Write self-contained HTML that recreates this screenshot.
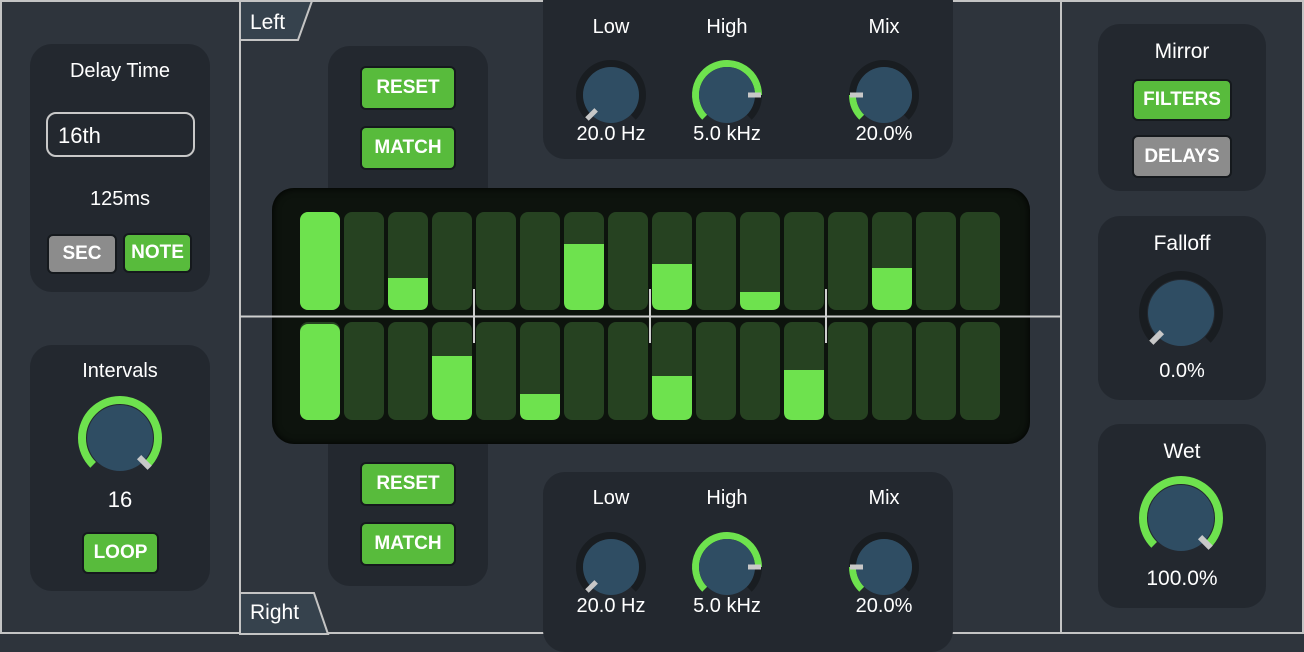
<!DOCTYPE html>
<html><head><meta charset="utf-8"><style>
*{margin:0;padding:0;box-sizing:border-box}
body{width:1304px;height:634px;background:#2e343c;position:relative;overflow:hidden;font-family:"Liberation Sans",sans-serif;color:#fff}
.a{position:absolute}
.pn{position:absolute;background:#23282f;border-radius:22px}
.t{position:absolute;text-align:center;font-size:20px;white-space:nowrap}
.b{position:absolute;border-radius:6px;text-align:center;font-size:19px;font-weight:bold;color:#fff;border:2px solid #15191d;line-height:36px}
.g{background:#58bb3c}
.gr{background:#8c8c8c}
svg{position:absolute;overflow:visible}
</style></head><body>
<!-- frame -->
<div class="a" style="left:0;top:0;width:1304px;height:634px;border:2px solid #c4c4c4"></div>
<div class="a" style="left:239px;top:0;width:2px;height:634px;background:#c4c4c4"></div>
<div class="a" style="left:1060px;top:0;width:2px;height:634px;background:#c4c4c4"></div>

<!-- left column -->
<div class="pn" style="left:30px;top:44px;width:180px;height:248px"></div>
<div class="t" style="left:30px;top:60px;width:180px">Delay Time</div>
<div class="a" style="left:46px;top:112px;width:149px;height:45px;border:2px solid #c8c8c8;border-radius:10px;font-size:22px;padding:9px 0 0 10px">16th</div>
<div class="t" style="left:30px;top:188px;width:180px">125ms</div>
<div class="b gr" style="left:47px;top:234px;width:70px;height:40px">SEC</div>
<div class="b g" style="left:123px;top:233px;width:69px;height:40px">NOTE</div>

<div class="pn" style="left:30px;top:345px;width:180px;height:246px"></div>
<div class="t" style="left:30px;top:360px;width:180px">Intervals</div>
<svg style="left:120px;top:438px" width="1" height="1"><path d="M-26.87 26.87 A38 38 0 1 1 26.87 26.87" fill="none" stroke="#6ee24e" stroke-width="8"/><circle r="33" fill="#2f4d63"/><rect x="-3" y="-42" width="6" height="15" fill="#c8c8c8" transform="rotate(135)"/></svg>
<div class="t" style="left:30px;top:487px;width:180px;font-size:22px">16</div>
<div class="b g" style="left:82px;top:532px;width:77px;height:42px;line-height:38px">LOOP</div>

<!-- tabs -->
<svg style="left:240px;top:0" width="80" height="42"><path d="M0 40 L58 40 L72 1 L0 1 Z" fill="#36424d" stroke="#c4c4c4" stroke-width="2"/><text x="10" y="29" fill="#fff" font-size="21" font-family="Liberation Sans">Left</text></svg>
<svg style="left:240px;top:592px" width="95" height="42"><path d="M0 1 L74 1 L88 42 L0 42 Z" fill="#36424d" stroke="#c4c4c4" stroke-width="2"/><text x="10" y="27" fill="#fff" font-size="21" font-family="Liberation Sans">Right</text></svg>

<!-- button panels -->
<div class="pn" style="left:328px;top:46px;width:160px;height:180px"></div>
<div class="b g" style="left:360px;top:66px;width:96px;height:44px;line-height:40px">RESET</div>
<div class="b g" style="left:360px;top:126px;width:96px;height:44px;line-height:40px">MATCH</div>
<div class="pn" style="left:328px;top:420px;width:160px;height:166px"></div>
<div class="b g" style="left:360px;top:462px;width:96px;height:44px;line-height:40px">RESET</div>
<div class="b g" style="left:360px;top:522px;width:96px;height:44px;line-height:40px">MATCH</div>

<!-- filter panels -->
<div class="pn" style="left:543px;top:-20px;width:410px;height:179px"></div>
<div class="pn" style="left:543px;top:472px;width:410px;height:180px"></div>

<div class="t" style="left:571px;top:16px;width:80px">Low</div>
<div class="t" style="left:687px;top:16px;width:80px">High</div>
<div class="t" style="left:844px;top:16px;width:80px">Mix</div>
<div class="t" style="left:561px;top:123px;width:100px">20.0 Hz</div>
<div class="t" style="left:677px;top:123px;width:100px">5.0 kHz</div>
<div class="t" style="left:834px;top:123px;width:100px">20.0%</div>
<svg style="left:611px;top:95px" width="1" height="1"><path d="M-22.27 22.27 A31.5 31.5 0 1 1 22.27 22.27" fill="none" stroke="#191d21" stroke-width="7"/><circle r="28" fill="#2f4d63"/><rect x="-2.5" y="-34" width="5" height="13" fill="#c8c8c8" transform="rotate(-135)"/></svg>
<svg style="left:727px;top:95px" width="1" height="1"><path d="M-22.27 22.27 A31.5 31.5 0 1 1 22.27 22.27" fill="none" stroke="#191d21" stroke-width="7"/><path d="M-22.27 22.27 A31.5 31.5 0 1 1 31.5 0" fill="none" stroke="#6ee24e" stroke-width="7"/><circle r="28" fill="#2f4d63"/><rect x="-2.5" y="-34" width="5" height="13" fill="#c8c8c8" transform="rotate(90)"/></svg>
<svg style="left:884px;top:95px" width="1" height="1"><path d="M-22.27 22.27 A31.5 31.5 0 1 1 22.27 22.27" fill="none" stroke="#191d21" stroke-width="7"/><path d="M-22.27 22.27 A31.5 31.5 0 0 1 -31.5 0" fill="none" stroke="#6ee24e" stroke-width="7"/><circle r="28" fill="#2f4d63"/><rect x="-2.5" y="-34" width="5" height="13" fill="#c8c8c8" transform="rotate(-90)"/></svg>

<div class="t" style="left:571px;top:487px;width:80px">Low</div>
<div class="t" style="left:687px;top:487px;width:80px">High</div>
<div class="t" style="left:844px;top:487px;width:80px">Mix</div>
<div class="t" style="left:561px;top:595px;width:100px">20.0 Hz</div>
<div class="t" style="left:677px;top:595px;width:100px">5.0 kHz</div>
<div class="t" style="left:834px;top:595px;width:100px">20.0%</div>
<svg style="left:611px;top:567px" width="1" height="1"><path d="M-22.27 22.27 A31.5 31.5 0 1 1 22.27 22.27" fill="none" stroke="#191d21" stroke-width="7"/><circle r="28" fill="#2f4d63"/><rect x="-2.5" y="-34" width="5" height="13" fill="#c8c8c8" transform="rotate(-135)"/></svg>
<svg style="left:727px;top:567px" width="1" height="1"><path d="M-22.27 22.27 A31.5 31.5 0 1 1 22.27 22.27" fill="none" stroke="#191d21" stroke-width="7"/><path d="M-22.27 22.27 A31.5 31.5 0 1 1 31.5 0" fill="none" stroke="#6ee24e" stroke-width="7"/><circle r="28" fill="#2f4d63"/><rect x="-2.5" y="-34" width="5" height="13" fill="#c8c8c8" transform="rotate(90)"/></svg>
<svg style="left:884px;top:567px" width="1" height="1"><path d="M-22.27 22.27 A31.5 31.5 0 1 1 22.27 22.27" fill="none" stroke="#191d21" stroke-width="7"/><path d="M-22.27 22.27 A31.5 31.5 0 0 1 -31.5 0" fill="none" stroke="#6ee24e" stroke-width="7"/><circle r="28" fill="#2f4d63"/><rect x="-2.5" y="-34" width="5" height="13" fill="#c8c8c8" transform="rotate(-90)"/></svg>

<!-- sequencer -->
<div class="a" style="left:272px;top:188px;width:758px;height:256px;background:#0d130d;border-radius:22px;box-shadow:inset 0 0 8px #000"></div>
<svg style="left:0;top:0" width="1304" height="634">
<g fill="#264221">
<rect x="300" y="212" width="40" height="98" rx="8"/><rect x="344" y="212" width="40" height="98" rx="8"/><rect x="388" y="212" width="40" height="98" rx="8"/><rect x="432" y="212" width="40" height="98" rx="8"/><rect x="476" y="212" width="40" height="98" rx="8"/><rect x="520" y="212" width="40" height="98" rx="8"/><rect x="564" y="212" width="40" height="98" rx="8"/><rect x="608" y="212" width="40" height="98" rx="8"/><rect x="652" y="212" width="40" height="98" rx="8"/><rect x="696" y="212" width="40" height="98" rx="8"/><rect x="740" y="212" width="40" height="98" rx="8"/><rect x="784" y="212" width="40" height="98" rx="8"/><rect x="828" y="212" width="40" height="98" rx="8"/><rect x="872" y="212" width="40" height="98" rx="8"/><rect x="916" y="212" width="40" height="98" rx="8"/><rect x="960" y="212" width="40" height="98" rx="8"/>
<rect x="300" y="322" width="40" height="98" rx="8"/><rect x="344" y="322" width="40" height="98" rx="8"/><rect x="388" y="322" width="40" height="98" rx="8"/><rect x="432" y="322" width="40" height="98" rx="8"/><rect x="476" y="322" width="40" height="98" rx="8"/><rect x="520" y="322" width="40" height="98" rx="8"/><rect x="564" y="322" width="40" height="98" rx="8"/><rect x="608" y="322" width="40" height="98" rx="8"/><rect x="652" y="322" width="40" height="98" rx="8"/><rect x="696" y="322" width="40" height="98" rx="8"/><rect x="740" y="322" width="40" height="98" rx="8"/><rect x="784" y="322" width="40" height="98" rx="8"/><rect x="828" y="322" width="40" height="98" rx="8"/><rect x="872" y="322" width="40" height="98" rx="8"/><rect x="916" y="322" width="40" height="98" rx="8"/><rect x="960" y="322" width="40" height="98" rx="8"/>
</g>
<g fill="#6ee24e">
<rect x="300" y="212" width="40" height="98" rx="8"/>
<path d="M388 278 H428 V302 Q428 310 420 310 H396 Q388 310 388 302 Z"/>
<path d="M564 244 H604 V302 Q604 310 596 310 H572 Q564 310 564 302 Z"/>
<path d="M652 264 H692 V302 Q692 310 684 310 H660 Q652 310 652 302 Z"/>
<path d="M740 292 H780 V302 Q780 310 772 310 H748 Q740 310 740 302 Z"/>
<path d="M872 268 H912 V302 Q912 310 904 310 H880 Q872 310 872 302 Z"/>
<rect x="300" y="324" width="40" height="96" rx="8"/>
<path d="M432 356 H472 V412 Q472 420 464 420 H440 Q432 420 432 412 Z"/>
<path d="M520 394 H560 V412 Q560 420 552 420 H528 Q520 420 520 412 Z"/>
<path d="M652 376 H692 V412 Q692 420 684 420 H660 Q652 420 652 412 Z"/>
<path d="M784 370 H824 V412 Q824 420 816 420 H792 Q784 420 784 412 Z"/>
</g>
<g stroke="#cfcfcf" stroke-width="2">
<line x1="240" y1="316.5" x2="1061" y2="316.5"/>
<line x1="474" y1="289" x2="474" y2="343"/><line x1="650" y1="289" x2="650" y2="343"/><line x1="826" y1="289" x2="826" y2="343"/>
</g>
</svg>

<!-- right column -->
<div class="pn" style="left:1098px;top:24px;width:168px;height:167px"></div>
<div class="t" style="left:1098px;top:40px;width:168px;font-size:21px">Mirror</div>
<div class="b g" style="left:1132px;top:79px;width:100px;height:42px;line-height:38px">FILTERS</div>
<div class="b gr" style="left:1132px;top:135px;width:100px;height:43px;line-height:39px">DELAYS</div>

<div class="pn" style="left:1098px;top:216px;width:168px;height:184px"></div>
<div class="t" style="left:1098px;top:232px;width:168px;font-size:21px">Falloff</div>
<svg style="left:1181px;top:313px" width="1" height="1"><path d="M-26.87 26.87 A38 38 0 1 1 26.87 26.87" fill="none" stroke="#191d21" stroke-width="8"/><circle r="33" fill="#2f4d63"/><rect x="-3" y="-42" width="6" height="15" fill="#c8c8c8" transform="rotate(-135)"/></svg>
<div class="t" style="left:1098px;top:360px;width:168px">0.0%</div>

<div class="pn" style="left:1098px;top:424px;width:168px;height:184px"></div>
<div class="t" style="left:1098px;top:440px;width:168px;font-size:21px">Wet</div>
<svg style="left:1181px;top:518px" width="1" height="1"><path d="M-26.87 26.87 A38 38 0 1 1 26.87 26.87" fill="none" stroke="#6ee24e" stroke-width="8"/><circle r="33" fill="#2f4d63"/><rect x="-3" y="-42" width="6" height="15" fill="#c8c8c8" transform="rotate(135)"/></svg>
<div class="t" style="left:1098px;top:567px;width:168px;font-size:21px">100.0%</div>
</body></html>
